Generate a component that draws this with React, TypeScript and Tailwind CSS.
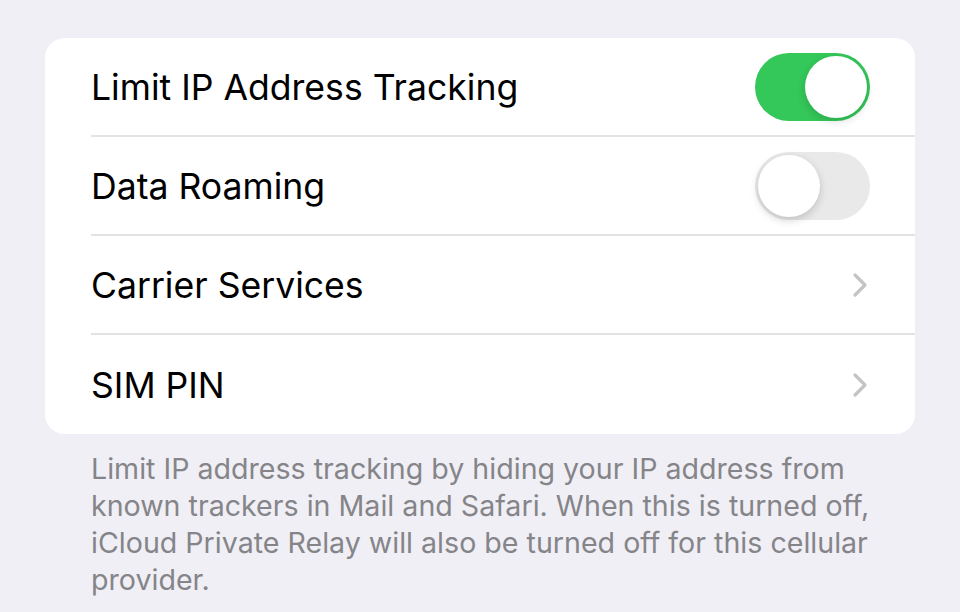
function Toggle({ on }: { on: boolean }) {
  return (
    <div
      className={
        on
          ? 'relative h-[68px] w-[115px] shrink-0 rounded-full bg-[#34c759]'
          : 'relative h-[68px] w-[115px] shrink-0 rounded-full bg-[#e9e9ea]'
      }
    >
      <div
        className={
          on
            ? 'absolute right-[3px] top-[3px] h-[62px] w-[62px] rounded-full bg-white shadow-[0_3px_8px_rgba(0,0,0,0.15)]'
            : 'absolute left-[3px] top-[3px] h-[62px] w-[62px] rounded-full bg-white shadow-[0_3px_8px_rgba(0,0,0,0.18)]'
        }
      />
    </div>
  )
}

function Chevron() {
  return (
    <svg width="16" height="26" viewBox="0 0 16 26" fill="none" className="mr-[2px]">
      <path d="M3 3 L13 13 L3 23" stroke="#c4c4c6" strokeWidth="3.2" strokeLinecap="round" strokeLinejoin="round" />
    </svg>
  )
}

function Row({ label, last, children }: { label: string; last?: boolean; children: React.ReactNode }) {
  return (
    <div className="flex h-[99px] items-stretch pl-[46px]">
      <div
        className={
          last
            ? 'flex flex-1 items-center justify-between pr-[45px]'
            : 'flex flex-1 items-center justify-between border-b-2 border-[#e3e3e6] pr-[45px]'
        }
      >
        <span className="pt-[3px] text-[35.6px] text-black">{label}</span>
        {children}
      </div>
    </div>
  )
}

export default function App() {
  return (
    <div
      className="h-[612px] w-[960px] overflow-hidden bg-[#f0eff5] px-[45px] pt-[38px]"
      style={{ fontFamily: 'Inter, "Open Sans", sans-serif' }}
    >
      <div className="overflow-hidden rounded-[20px] bg-white">
        <Row label="Limit IP Address Tracking">
          <Toggle on />
        </Row>
        <Row label="Data Roaming">
          <Toggle on={false} />
        </Row>
        <Row label="Carrier Services">
          <Chevron />
        </Row>
        <Row label="SIM PIN" last>
          <Chevron />
        </Row>
      </div>
      <p className="mt-[16px] pl-[46px] pr-[30px] text-[28.6px] leading-[37px] text-[#858589]">
        Limit IP address tracking by hiding your IP address from known trackers in Mail and Safari. When this is turned off,
        iCloud Private Relay will also be turned off for this cellular provider.
      </p>
    </div>
  )
}
